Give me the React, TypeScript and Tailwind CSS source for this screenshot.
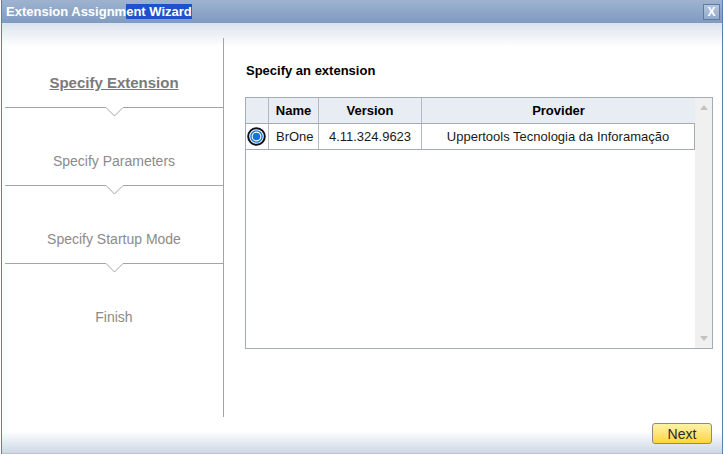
import React from "react";

const font = { fontFamily: '"Liberation Sans", Arial, sans-serif' };

function Separator() {
  return (
    <svg width="218" height="10" className="block">
      <polyline
        points="0,0.5 101,0.5 109.5,9 118,0.5 218,0.5"
        fill="none"
        stroke="#a4a4a4"
        strokeWidth="1"
      />
    </svg>
  );
}

function Radio() {
  return (
    <svg width="19" height="19" viewBox="0 0 19 19" className="block">
      <circle cx="9.5" cy="9.5" r="8.3" fill="white" stroke="#111" strokeWidth="2" />
      <circle cx="9.5" cy="9.5" r="5.6" fill="white" stroke="#1a6fe8" strokeWidth="1.4" />
      <circle cx="9.5" cy="9.5" r="3.8" fill="#1a6fe8" />
    </svg>
  );
}

export default function App() {
  return (
    <div className="w-[724px] h-[454px] bg-white overflow-hidden" style={font}>
      <div className="ml-[1px] w-[722px] h-[454px] flex flex-col border-x border-[#5b7fae]">
        {/* title bar */}
        <div className="h-[23px] flex items-center justify-between pl-[4px] pr-[2px] bg-gradient-to-b from-[#9fb3cf] to-[#7e9bc1]">
          <div className="text-[13px] font-bold text-white leading-[16px]">
            <span>Extension Assignm</span>
            <span className="bg-[#1e52cc]">ent Wizard</span>
          </div>
          <div className="w-[17px] h-[16px] border border-[#5d7aa3] bg-gradient-to-b from-[#b4c6de] to-[#93aacb] flex items-center justify-center text-white text-[12px] font-bold leading-none">
            X
          </div>
        </div>
        {/* body */}
        <div className="flex-1 flex flex-col bg-[linear-gradient(to_bottom,#dbe2ed_0px,#ffffff_24px,#ffffff_408px,#ced7e6_430px)]">
          <div className="flex pt-[15px] pl-[3px]">
            {/* left panel */}
            <div className="w-[219px] h-[379px] border-r border-[#a4a4a4] flex flex-col text-[#8b8b8b] text-[14px]">
              <div className="h-[69px] flex items-end justify-center pb-[16px] leading-[16px]">
                <span className="font-bold underline text-[15px] text-[#7a7a7a]">Specify Extension</span>
              </div>
              <Separator />
              <div className="h-[68px] flex items-end justify-center pb-[16px] leading-[16px]">
                <span>Specify Parameters</span>
              </div>
              <Separator />
              <div className="h-[68px] flex items-end justify-center pb-[16px] leading-[16px]">
                <span>Specify Startup Mode</span>
              </div>
              <Separator />
              <div className="pt-[36px] flex justify-center leading-[16px]">
                <span>Finish</span>
              </div>
            </div>
            {/* right content */}
            <div className="flex flex-col">
              <div className="ml-[22px] mt-[25px] text-[13px] font-bold text-black leading-[16px]">
                Specify an extension
              </div>
              <div className="ml-[21px] mt-[18px] w-[468px] h-[252px] border border-[#a3abb4] flex bg-white">
                <div className="w-[449px] flex flex-col">
                  <div className="flex h-[26px] bg-[#e8ecf3] border-b border-[#a3abb4] text-[13px] font-bold text-black">
                    <div className="w-[23px] border-r border-[#b4bac2]" />
                    <div className="w-[50px] border-r border-[#b4bac2] flex items-center justify-center">Name</div>
                    <div className="w-[103px] border-r border-[#b4bac2] flex items-center justify-center">Version</div>
                    <div className="flex-1 flex items-center justify-center">Provider</div>
                  </div>
                  <div className="flex h-[26px] border-b border-r border-[#a3abb4] text-[13px] text-[#1a1a1a]">
                    <div className="w-[23px] border-r border-[#b4bac2] flex items-center justify-start pl-[1px]">
                      <Radio />
                    </div>
                    <div className="w-[50px] border-r border-[#b4bac2] flex items-center pl-[7px]">BrOne</div>
                    <div className="w-[103px] border-r border-[#b4bac2] flex items-center justify-center">4.11.324.9623</div>
                    <div className="flex-1 flex items-center justify-center">Uppertools Tecnologia da Inforamação</div>
                  </div>
                </div>
                <div className="flex-1 bg-[#f0f0f0] flex flex-col items-center justify-between py-[7px]">
                  <svg width="8" height="5" viewBox="0 0 8 5"><polygon points="0,5 8,5 4,0" fill="#c2c2c2" /></svg>
                  <svg width="8" height="5" viewBox="0 0 8 5"><polygon points="0,0 8,0 4,5" fill="#c2c2c2" /></svg>
                </div>
              </div>
            </div>
          </div>
          {/* footer */}
          <div className="flex justify-end pr-[10px] mt-[6px]">
            <button className="w-[60px] h-[21px] rounded-[3px] border border-[#8d8b7f] bg-gradient-to-b from-[#fff2a6] to-[#ffd530] text-[14px] text-[#2a2a2a] leading-none flex items-center justify-center">
              Next
            </button>
          </div>
        </div>
        <div className="h-[1px] bg-[#b7c4d8]" />
      </div>
    </div>
  );
}
